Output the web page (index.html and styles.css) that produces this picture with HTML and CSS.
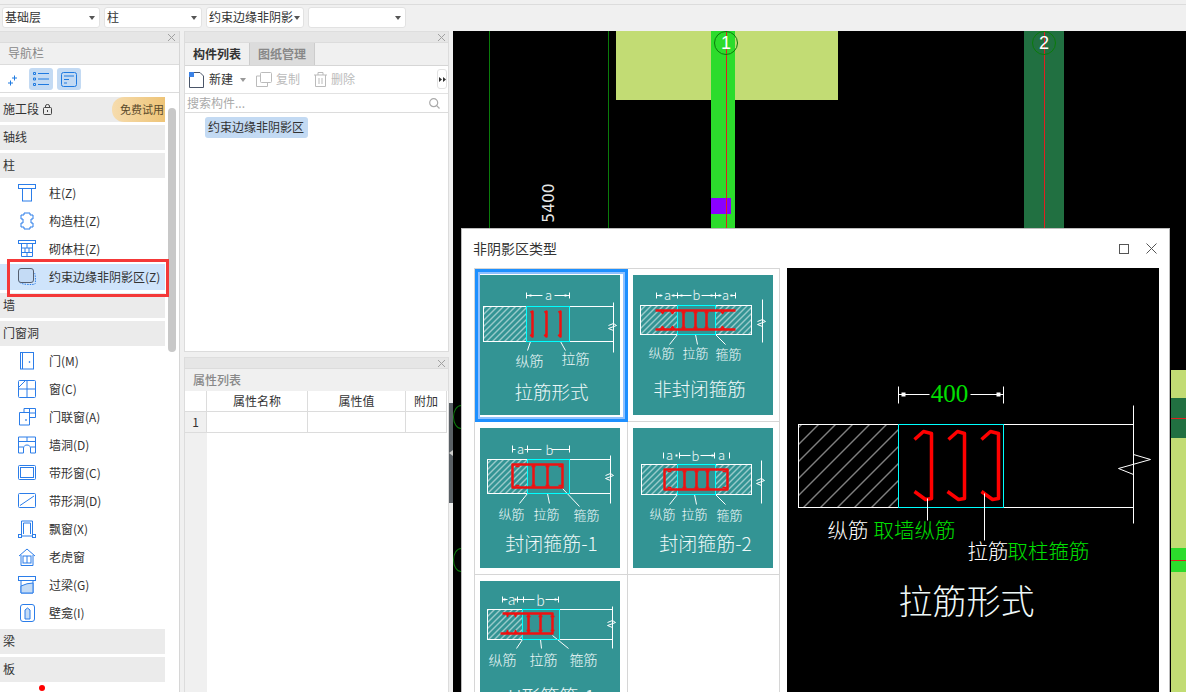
FILE: index.html
```html
<!DOCTYPE html>
<html lang="zh-CN">
<head>
<meta charset="utf-8">
<title>非阴影区类型</title>
<link rel="stylesheet" href="styles.css">
</head>
<body>
<div class="app">
  <div class="topbar">
    <div class="select"><span>基础层</span><i class="caret"></i></div>
    <div class="select"><span>柱</span><i class="caret"></i></div>
    <div class="select"><span>约束边缘非阴影</span><i class="caret"></i></div>
    <div class="select"><span></span><i class="caret"></i></div>
  </div>
  <div class="main">
    <aside class="nav">
      <div class="panel-head"><svg class="close" viewBox="0 0 7 7"><path d="M0 0l7 7M7 0L0 7"/></svg></div>
      <div class="nav-title">导航栏</div>
      <div class="nav-tools">
        <span class="tool"><svg width="14" height="14" viewBox="0 0 14 14" fill="none" stroke="#1f7ae0"><path d="M8.500 3.500v5M6 6h5M4.500 8.500v5M2 11h5"/></svg></span>
        <span class="tool on"><svg width="16" height="14" viewBox="0 0 16 14" fill="none" stroke="#1f7ae0"><path d="M5 1.500h11M5 7h11M5 12.500h11M.5.500h2v2h-2zM.5 6h2v2h-2zM.5 11.500h2v2h-2z"/></svg></span>
        <span class="tool on"><svg width="16" height="15" viewBox="0 0 16 15" fill="none" stroke="#1f7ae0"><rect x=".5" y=".5" width="15" height="14" rx="2"/><path d="M3 4h10M3 7.500h5M3 11h3"/></svg></span>
      </div>
      <div class="nav-list">
        <div class="row first">施工段 <svg class="lock" width="9" height="11" viewBox="0 0 9 11" fill="none" stroke="#444"><rect x=".5" y="3.500" width="8" height="7" rx="1"/><path d="M2.500 3.500V2a2 1.500 0 0 1 4 0v1.500M4.500 6v2"/></svg><span class="trial">免费试用</span></div>
        <div class="row">轴线</div>
        <div class="row">柱</div>
        <div class="group">
          <div class="item"><svg class="ico" viewBox="0 0 18 18"><rect x=".5" y=".5" width="17" height="4"/><rect x="4.500" y="4.500" width="9" height="12.500"/></svg>柱(Z)</div>
          <div class="item"><svg class="ico" viewBox="0 0 18 18"><path d="M6 1h6v2h3v4h-2v4h2v4h-3v2H6v-2H3v-4h2V7H3V3h3z" stroke-linejoin="round"/></svg>构造柱(Z)</div>
          <div class="item"><svg class="ico" viewBox="0 0 18 18"><rect x=".5" y=".5" width="17" height="3"/><path d="M3.500 3.500h11v13h-11zM3.500 8h11M3.500 12.500h11M9 3.500V8M7 8v4.500M11 8v4.500M9 12.500v4"/></svg>砌体柱(Z)</div>
          <div class="item active"><svg class="ico" viewBox="0 0 18 18"><path d="M2 14.500c1 2 13 2.500 15 1.500.8-1 .5-10-.5-11" stroke-dasharray="1.500 1"/><rect x=".5" y=".5" width="15" height="14" rx="2.500" fill="#c4dbf5" stroke="#555f70"/></svg>约束边缘非阴影区(Z)<span class="redbox"></span></div>
        </div>
        <div class="row">墙</div>
        <div class="row">门窗洞</div>
        <div class="group">
          <div class="item"><svg class="ico" viewBox="0 0 18 18"><rect x="2.500" y=".5" width="13" height="16.500"/><path d="M4.500 .5V17"/><circle cx="11.500" cy="10" r=".5"/></svg>门(M)</div>
          <div class="item"><svg class="ico" viewBox="0 0 18 18"><rect x=".5" y=".5" width="17" height="17" rx="1"/><path d="M.5 9h17M9 .5v17M1 7L7 1"/></svg>窗(C)</div>
          <div class="item"><svg class="ico" viewBox="0 0 18 18"><path d="M1.500 17V4.500h10V17zM11.500 9.500h6V.5H6v4M11.500 .5v9M11.500 5h6"/><circle cx="8" cy="12" r=".5"/></svg>门联窗(A)</div>
          <div class="item"><svg class="ico" viewBox="0 0 18 18"><path d="M.5 17V1h17v16h-5v-5c0-4-7-4-7 0v5zM.5 5.500h17M.5 11h4.500M13 11h4.500M9 1v4.500"/></svg>墙洞(D)</div>
          <div class="item"><svg class="ico" viewBox="0 0 18 18"><rect x=".5" y="1.500" width="17" height="14" rx="1"/><rect x="2.500" y="3.500" width="13" height="10"/></svg>带形窗(C)</div>
          <div class="item"><svg class="ico" viewBox="0 0 18 18"><rect x=".5" y="1.500" width="17" height="14" rx="1"/><path d="M2 13.500L16 4"/></svg>带形洞(D)</div>
          <div class="item"><svg class="ico" viewBox="0 0 18 18"><path d="M3.500 14V1h11v13M5.500 14V3h7v11"/><rect x=".5" y="14.500" width="3" height="3"/><rect x="14.500" y="14.500" width="3" height="3"/><path d="M3.500 16h11"/></svg>飘窗(X)</div>
          <div class="item"><svg class="ico" viewBox="0 0 18 18"><path d="M1 8l8-7 8 7M3 7v10.500h12V7"/><rect x="5" y="8" width="8" height="7"/><path d="M9 8v7"/></svg>老虎窗</div>
          <div class="item"><svg class="ico" viewBox="0 0 18 18"><rect x=".5" y=".5" width="17" height="4"/><path d="M3 4.500h12v12.500H3z"/><path d="M3 10q6-3 12-3v10H3z" fill="#c4dbf5"/></svg>过梁(G)</div>
          <div class="item"><svg class="ico" viewBox="0 0 18 18"><rect x="2.500" y=".5" width="14" height="17" rx="2.500"/><path d="M7 15V6l2.500-2L12 6v9z" fill="#c4dbf5"/></svg>壁龛(I)</div>
        </div>
        <div class="row tight">梁</div>
        <div class="row">板</div>
      </div>
      <span class="scrollbar"></span>
      <span class="reddot"></span>
    </aside>

    <section class="mid">
      <div class="mid-top">
        <div class="panel-head"><svg class="close" viewBox="0 0 7 7"><path d="M0 0l7 7M7 0L0 7"/></svg></div>
        <div class="tabs"><span class="tab on">构件列表</span><span class="tab">图纸管理</span></div>
        <div class="actions">
          <span class="act dark"><svg width="16" height="16" viewBox="0 0 16 16" fill="none" stroke="#4a5568"><path d="M.5 5v10.500h14V4L11 .5H3"/><rect x="0" y="0" width="5" height="5" fill="#3b82e6" stroke="none"/></svg>新建<i class="caret small"></i></span>
          <span class="act"><svg width="16" height="15" viewBox="0 0 16 15" fill="none" stroke="#bbb"><rect x="4.500" y=".5" width="11" height="10" rx="1"/><path d="M4 4H.5v10.500h11V11"/></svg>复制</span>
          <span class="act"><svg width="13" height="15" viewBox="0 0 13 15" fill="none" stroke="#bbb"><path d="M0 3h13M4 3V.5h5V3M1.500 3v11.500h10V3M5 6v6M8 6v6"/></svg>删除</span>
          <span class="more"><svg width="7" height="5" viewBox="0 0 7 5" fill="#333"><path d="M0 0l3 2.500L0 5zM4 0l3 2.500L4 5z"/></svg></span>
        </div>
        <div class="search"><span>搜索构件...</span><svg width="11" height="11" viewBox="0 0 11 11" fill="none" stroke="#aaa" stroke-width="1.200"><circle cx="4.700" cy="4.700" r="4"/><path d="M7.700 7.700L10.500 10.500"/></svg></div>
        <div class="tree"><span class="chip">约束边缘非阴影区</span></div>
      </div>
      <div class="mid-bottom">
        <div class="panel-head"><svg class="close" viewBox="0 0 7 7"><path d="M0 0l7 7M7 0L0 7"/></svg></div>
        <div class="prop-title">属性列表</div>
        <div class="grid-table">
          <span class="cell corner"></span><span class="cell">属性名称</span><span class="cell">属性值</span><span class="cell">附加</span>
          <span class="cell idx">1</span><span class="cell"></span><span class="cell"></span><span class="cell"></span>
        </div>
        <div class="idx-rest"></div>
      </div>
      <span class="splitter"></span>
    </section>

    <section class="canvas">
      <span class="cad gline g1"></span>
      <span class="cad gline g2"></span>
      <span class="cad slab"></span>
      <span class="cad col col1"></span>
      <span class="cad purple"></span>
      <span class="cad col col2"></span>
      <span class="cad redline r1"></span>
      <span class="cad redline r2"></span>
      <span class="cad axis a1">1</span>
      <span class="cad axis a2">2</span>
      <span class="cad dim5400">5400</span>
      <span class="cad bubble b1"></span>
      <span class="cad bubble b2"></span>
      <span class="cad slab2"></span>
      <span class="cad band1"></span>
      <span class="cad band2"></span>
      <span class="cad rl3"></span>
      <span class="cad rl4"></span>

      <div class="dialog">
        <div class="dlg-head">
          <span>非阴影区类型</span>
          <span class="dlg-btns"><i class="maxi"></i><svg width="11" height="11" viewBox="0 0 11 11" fill="none" stroke="#555"><path d="M.5.500l10 10M10.500.5l-10 10"/></svg></span>
        </div>
        <div class="dlg-body">
          <div class="thumbs">
            <div class="thumb sel">
              <svg class="card" viewBox="0 0 140 140">
                <defs>
                  <pattern id="h6" width="6" height="6" patternUnits="userSpaceOnUse"><path class="hatch" d="M0 6L6 0"/></pattern>
                  <pattern id="h17" width="17" height="17" patternUnits="userSpaceOnUse"><path class="hatch" d="M0 17L17 0"/></pattern>
                </defs>
                <path class="w" d="M46 17v6M89 17v6M46 20h16M74 20h15M46 31h87M46 66h87M133 27v50M128 50l5-2 3 2-8 3 5 2M50 66l-3 9M80 66l5 9"/>
                <path class="sq" d="M49 19h2v2h-2zM84 19h2v2h-2z"/>
                <rect x="3" y="31" width="43" height="35" fill="url(#h6)" stroke="#fff"/>
                <rect class="cy" x="46" y="31" width="43" height="35"/>
                <path class="r" d="M50 37l2-1v25l-2-2M64 37l2-1v25l-2-2M78 37l2-1v25l-2-2"/>
                <text class="t" x="68" y="24" font-size="13">a</text>
                <text class="t" x="49" y="90" font-size="14">纵筋</text>
                <text class="t" x="95" y="88" font-size="14">拉筋</text>
                <text class="t" x="71" y="123" font-size="18.500">拉筋形式</text>
              </svg>
            </div>
            <div class="thumb">
              <svg class="card" viewBox="0 0 140 140">
                <path class="w" d="M23 17v6M44 17v6M82 17v6M102 17v6M23 20h6M38 20h6M44 20h14M68 20h14M82 20h6M97 20h5M7 30h111M7 59h111M118 30v29M129 24v43M124 46l5-2 3 2-8 3 5 2M44 59l-8 10M62 59l2 10M82 59l10 10"/>
                <path class="sq" d="M26 19h2v2h-2zM39 19h2v2h-2zM47 19h2v2h-2zM77 19h2v2h-2zM85 19h2v2h-2zM97 19h2v2h-2z"/>
                <rect x="7" y="30" width="37" height="29" fill="url(#h6)" stroke="#fff"/>
                <rect x="82" y="30" width="36" height="29" fill="url(#h6)" stroke="#fff"/>
                <rect class="cy" x="44" y="30" width="38" height="29"/>
                <path class="r b" d="M22 35h80M22 54h80M50 35v19M62 35v19M73 35v19"/>
                <path class="r tick" d="M27 35l2 3 2-3M37 35l2 3 2-3M48 37h4M60 37h4M71 37h4M87 35l2 3 2-3M27 54l2-3 2 3M37 54l2-3 2 3M48 52h4M60 52h4M71 52h4M87 54l2-3 2 3"/>
                <text class="t" x="34" y="24" font-size="13">a</text><text class="t" x="63" y="24" font-size="13">b</text><text class="t" x="92" y="24" font-size="13">a</text>
                <text class="t" x="28" y="82" font-size="13">纵筋</text>
                <text class="t" x="62" y="82" font-size="13">拉筋</text>
                <text class="t" x="95" y="83" font-size="13">箍筋</text>
                <text class="t" x="66" y="120" font-size="18.500">非封闭箍筋</text>
              </svg>
            </div>
            <div class="thumb">
              <svg class="card" viewBox="0 0 140 140">
                <path class="w" d="M32 17v7M47 17v7M89 17v7M32 21h3M44 21h3M47 21h14M71 21h18M7 31h123M7 65h123M130 27v48M125 47l5-2 3 2-8 3 5 2M47 65l-8 10M67 65l2 10M82 60l17 18"/>
                <rect x="7" y="31" width="40" height="34" fill="url(#h6)" stroke="#fff"/>
                <rect class="cy" x="47" y="31" width="42" height="34"/>
                <path class="r b" d="M32 36h50v23H32zM53 36v23M67 36v23"/>
                <path class="r tick" d="M35 38h4M51 38h4M65 38h4M78 38h4M35 57h4M51 57h4M65 57h4M78 57h4"/>
                <text class="t" x="40" y="25" font-size="13">a</text><text class="t" x="69" y="26" font-size="13">b</text>
                <text class="t" x="31" y="90" font-size="13">纵筋</text>
                <text class="t" x="66" y="90" font-size="13">拉筋</text>
                <text class="t" x="106" y="91" font-size="13">箍筋</text>
                <text class="t" x="71" y="122" font-size="19">封闭箍筋-1</text>
              </svg>
            </div>
            <div class="thumb">
              <svg class="card" viewBox="0 0 140 140">
                <path class="w" d="M30 24v6M46 24v6M81 24v6M96 24v6M46 27h11M67 27h14M8 36h110M8 66h110M118 36v30M128 32v43M123 52l5-2 3 2-8 3 5 2M44 66l-8 10M61 66l2 10M82 66l10 10"/>
                <path class="sq" d="M42 26h2v2h-2zM78 26h2v2h-2z"/>
                <rect x="8" y="36" width="36" height="30" fill="url(#h6)" stroke="#fff"/>
                <rect x="82" y="36" width="36" height="30" fill="url(#h6)" stroke="#fff"/>
                <rect class="cy" x="44" y="36" width="38" height="30"/>
                <path class="r b" d="M31 41h63v20H31zM51 41v20M63 41v20M74 41v20"/>
                <path class="r tick" d="M34 43h4M49 43h4M61 43h4M72 43h4M89 43h4M34 59h4M49 59h4M61 59h4M72 59h4M89 59h4"/>
                <text class="t" x="36" y="31" font-size="13">a</text><text class="t" x="62" y="32" font-size="13">b</text><text class="t" x="88" y="31" font-size="13">a</text>
                <text class="t" x="29" y="90" font-size="13">纵筋</text>
                <text class="t" x="61" y="90" font-size="13">拉筋</text>
                <text class="t" x="96" y="91" font-size="13">箍筋</text>
                <text class="t" x="72" y="122" font-size="19">封闭箍筋-2</text>
              </svg>
            </div>
            <div class="thumb">
              <svg class="card" viewBox="0 0 140 140">
                <path class="w" d="M22 15v6M37 15v6M43 15v6M78 15v6M22 18h5M36 18h8M43 18h11M65 18h13M7 28h125M7 58h125M132 25v42M127 41l5-2 3 2-8 3 5 2M42 58l-6 9M60 58l1 9M72 54l16 13"/>
                <path class="sq" d="M23 17h2v2h-2zM34 17h2v2h-2zM74 17h2v2h-2z"/>
                <rect x="7" y="28" width="35" height="30" fill="url(#h6)" stroke="#fff"/>
                <rect class="cy" x="42" y="28" width="37" height="30"/>
                <path class="r b" d="M22 32h50v20H20M48 32v20M60 32v20"/>
                <path class="r tick" d="M26 32l1 3 1-3M34 32l1 3 1-3M26 52l1-3 1 3M34 52l1-3 1 3M46 35h4M58 35h4M70 35h4M46 49h4M58 49h4M70 49h4"/>
                <text class="t" x="31" y="23" font-size="14">a</text><text class="t" x="60" y="24" font-size="14">b</text>
                <text class="t" x="22" y="83" font-size="14">纵筋</text>
                <text class="t" x="63" y="83" font-size="14">拉筋</text>
                <text class="t" x="103" y="83" font-size="14">箍筋</text>
                <text class="t" x="71" y="122" font-size="19">U形箍筋-1</text>
              </svg>
            </div>
            <div class="thumb"></div>
          </div>
          <div class="preview">
            <svg width="372" height="424" viewBox="0 0 372 424">
              <path d="M111 118v17M216 118v17M111 126h31M183 126h33" fill="none" stroke="#fff"/>
              <path d="M114 124h4v4h-4zM209 124h4v4h-4z" fill="#fff"/>
              <text class="big green serif" x="162" y="133" font-size="25">400</text>
              <rect x="11" y="156" width="100" height="83" fill="url(#h17)" stroke="#fff"/>
              <path d="M216 156h130M216 239h130M346 137v118M346 186l17 5-32 9 15 6" fill="none" stroke="#fff"/>
              <rect x="111" y="156" width="105" height="83" fill="none" stroke="#00ffff"/>
              <path class="r big-r" d="M127 171l9-8 8 2v65l-6 1-11-8M161 171l9-8 7 2v65l-6 1-11-8M194 171l9-8 8 2v65l-6 1-11-8"/>
              <path d="M140 230v22M197 225v47" fill="none" stroke="#fff"/>
              <text class="s" x="40" y="269" font-size="20.500">纵筋</text>
              <text class="s green" x="86" y="269" font-size="20.500">取墙纵筋</text>
              <text class="s" x="180" y="290" font-size="20.500">拉筋</text>
              <text class="s green" x="220" y="290" font-size="20.500">取柱箍筋</text>
              <text class="t" x="179" y="345" font-size="34" fill="#fff">拉筋形式</text>
            </svg>
          </div>
        </div>
      </div>
    </section>
  </div>
</div>
</body>
</html>
```
FILE: styles.css
```css
* { box-sizing: border-box; }
html, body { margin: 0; padding: 0; }
body { background: #f0f0f0; font: 12px/1.2 "Noto Sans CJK SC", "Noto Sans", sans-serif; color: #333; }
.app { width: 1186px; height: 692px; overflow: hidden; display: flex; flex-direction: column; }

.topbar { height: 27px; flex: none; margin-top: 4px; border-top: 1px solid #dcdcdc; padding: 2px 0 0 2px; display: flex; gap: 4px; }
.select { width: 98px; height: 21px; background: #fff; border: 1px solid #e2e2e2; border-radius: 3px; padding: 0 4px 0 2px; display: flex; align-items: center; justify-content: space-between; white-space: nowrap; overflow: hidden; }
.caret { width: 0; height: 0; flex: none; border: 3px solid transparent; border-top: 4px solid #555; border-bottom: 0; margin-left: 1px; }
.caret.small { border-top-color: #999; margin-left: 3px; }

.main { flex: 1; display: flex; min-height: 0; }
.panel-head { height: 12px; flex: none; background: #e6e6e6; border-top: 1px solid #dedede; border-bottom: 1px solid #dcdcdc; position: relative; }
.close { position: absolute; right: 4px; top: 2px; width: 7px; height: 7px; fill: none; stroke: #a0a0a0; overflow: visible; }

.nav { width: 180px; flex: none; border-right: 1px solid #d6d6d6; position: relative; display: flex; flex-direction: column; background: #fff; overflow: hidden; }
.nav-title { height: 22px; flex: none; background: #f0f0f0; border-bottom: 1px solid #dcdcdc; padding-left: 8px; line-height: 20px; color: #888; }
.nav-tools { height: 28px; flex: none; border-bottom: 1px solid #dcdcdc; background: #fff; padding: 3px 0 0 1px; display: flex; gap: 4px; }
.tool { width: 24px; height: 22px; border-radius: 3px; display: flex; align-items: center; justify-content: center; }
.tool.on { background: #c3daf3; }
.nav-list { width: 165px; }
.row { height: 25px; margin-top: 3px; background: #ebebeb; padding-left: 3px; line-height: 24px; position: relative; white-space: nowrap; overflow: hidden; }
.row.first { margin-top: 4px; }
.lock { margin-left: 1px; vertical-align: -1px; }
.trial { position: absolute; right: 0; top: 0; width: 53px; height: 25px; border-radius: 12px 0 0 12px; background: linear-gradient(90deg, #f6dcae, #eec477); color: #5a4a2a; padding-left: 8px; line-height: 24px; font-size: 11px; }
.group { margin-top: 1px; }
.group + .row { margin-top: 2px; }
.item { height: 28px; padding-left: 18px; display: flex; align-items: center; position: relative; white-space: nowrap; }
.ico { width: 18px; height: 18px; flex: none; margin-right: 13px; fill: none; stroke: #2b7de9; overflow: visible; }
.item.active { background: linear-gradient(#fff 1px, #cfe4fb 1px, #cfe4fb 27px, #fff 27px); z-index: 2; }
.redbox { position: absolute; left: 7px; top: -4px; width: 162px; height: 38px; border: 3px solid #f43838; }
.row.tight { margin-top: 2px; }
.scrollbar { position: absolute; left: 168px; top: 77px; width: 8px; height: 244px; border-radius: 4px; background: #c8c8c8; }
.reddot { position: absolute; left: 39px; top: 654px; width: 6px; height: 6px; border-radius: 50%; background: #f00; }

.mid { width: 265px; flex: none; margin-left: 4px; display: flex; flex-direction: column; gap: 5px; position: relative; }
.mid-top { height: 321px; flex: none; display: flex; flex-direction: column; border: 1px solid #dcdcdc; border-top: 0; background: #fff; }
.mid .close { right: 3px; }
.tabs { height: 23px; flex: none; background: #f0f0f0; border-bottom: 1px solid #d6d6d6; display: flex; }
.tab { width: 65px; line-height: 22px; text-align: center; background: #dcdcdc; color: #888; font-weight: 700; border-right: 1px solid #ccc; }
.tab.on { background: #f0f0f0; color: #333; }
.actions { height: 28px; flex: none; border-bottom: 1px solid #e2e2e2; display: flex; align-items: center; padding-left: 4px; position: relative; color: #bbb; }
.act { display: flex; align-items: center; gap: 4px; margin-right: 14px; }
.act.dark { color: #333; margin-right: 10px; }
.more { position: absolute; right: 1px; top: 3px; width: 10px; height: 20px; border: 1px solid #e2e2e2; border-radius: 3px; display: flex; align-items: center; justify-content: center; }
.search { height: 19px; flex: none; border-bottom: 1px solid #dcdcdc; padding: 0 8px 0 2px; color: #aaa; display: flex; align-items: center; justify-content: space-between; }
.tree { flex: 1; padding: 4px 0 0 20px; }
.chip { display: inline-block; height: 21px; line-height: 20px; padding: 0 4px 0 3px; border-radius: 3px; background: #c3daf3; white-space: nowrap; }

.mid-bottom { flex: 1; min-height: 0; display: flex; flex-direction: column; border: 1px solid #dcdcdc; border-top: 0; background: #fff; border-bottom: 0; }
.prop-title { height: 22px; flex: none; background: #f0f0f0; padding-left: 8px; line-height: 22px; color: #888; font-weight: 500; }
.grid-table { display: grid; grid-template-columns: 22px 101px 98px 41px; grid-auto-rows: 21px; flex: none; }
.cell { border-right: 1px solid #dcdcdc; border-bottom: 1px solid #dcdcdc; text-align: center; line-height: 20px; background: #fff; }
.cell.idx { background: #f0f0f0; }
.idx-rest { width: 22px; flex: 1; background: #f0f0f0; }
.splitter { position: absolute; right: -4px; top: 372px; width: 4px; height: 100px; background: #5a6066; }
.splitter::after { content: ""; position: absolute; left: 0; top: 47px; border: 3px solid transparent; border-right: 4px solid #ccc; border-left: 0; }

.canvas { flex: 1; margin-left: 4px; background: #000; position: relative; overflow: hidden; }
.cad { position: absolute; display: block; }
.gline { top: 0; width: 1px; height: 200px; background: #0a7a0a; }
.g1 { left: 36px; }
.g2 { left: 155px; }
.slab { left: 163px; top: 0; width: 222px; height: 69px; background: #c2dc74; }
.col { top: 0; height: 200px; }
.col1 { left: 258px; width: 24px; background: #2cdc2c; }
.col2 { left: 571px; width: 40px; background: #217041; }
.purple { left: 258px; top: 167px; width: 20px; height: 16px; background: #8a00ff; z-index: 1; }
.redline { top: 0; width: 1px; height: 200px; background: #e02020; z-index: 2; }
.r1 { left: 273px; }
.r2 { left: 591px; }
.axis { top: 0; width: 24px; height: 24px; border: 1px solid #0a7a0a; border-radius: 50%; color: #fff; text-align: center; font: 18px/22px "Liberation Sans", sans-serif; z-index: 3; }
.a1 { left: 261px; }
.a2 { left: 579px; }
.dim5400 { left: 74px; top: 162px; width: 44px; height: 20px; transform: rotate(-90deg); color: #e8e8e8; font: 15.500px/20px "DejaVu Sans", sans-serif; text-align: center; }
.bubble { left: 0; width: 16px; height: 24px; border: 1px solid #0a7a0a; border-radius: 50%; }
.b1 { top: 374px; }
.b2 { top: 517px; }
.slab2 { left: 718px; top: 339px; width: 15px; height: 322px; background: #c2dc74; }
.band1 { left: 718px; top: 367px; width: 15px; height: 40px; background: #217041; }
.band2 { left: 718px; top: 517px; width: 15px; height: 24px; background: #2cdc2c; }
.rl3 { left: 718px; top: 387px; width: 15px; height: 1px; background: #e02020; }
.rl4 { left: 718px; top: 529px; width: 15px; height: 1px; background: #e02020; }

.dialog { position: absolute; left: 8px; top: 197px; width: 709px; height: 480px; background: #fff; border: 1px solid #bdbdbd; z-index: 6; }
.dlg-head { height: 39px; display: flex; align-items: center; justify-content: space-between; padding: 0 12px 0 11px; color: #333; font-size: 14px; }
.dlg-btns { display: flex; align-items: center; gap: 17px; }
.maxi { display: block; width: 10px; height: 10px; border: 1px solid #555; }
.dlg-body { display: flex; padding-left: 12px; gap: 7px; }
.thumbs { width: 306px; height: 440px; border: 1px solid #d6d6d6; display: grid; grid-template-columns: 153px 151px; grid-auto-rows: 153px; align-content: start; flex: none; }
.thumb { border-right: 1px solid #d6d6d6; border-bottom: 1px solid #d6d6d6; padding: 6px 0 0 5px; }
.thumb:nth-child(2n) { border-right: 0; }
.thumb:nth-child(n+5) { border-bottom: 0; }
.thumb.sel { border: 0; box-shadow: inset 0 0 0 3px #1e90ff, inset 0 0 0 5px #8fc1ff; }
.card { display: block; width: 140px; height: 140px; background: #339494; overflow: hidden; }
.card > *, .preview svg > * { transform: translate(.5px, .5px); }
.hatch { stroke: #fff; stroke-width: 1; shape-rendering: crispEdges; }
.w { fill: none; stroke: #fff; }
.sq { fill: #fff; stroke: none; }
.cy { fill: none; stroke: #00ffff; }
.r { fill: none; stroke: #f01010; stroke-width: 2.500; stroke-linejoin: round; }
.r.tick { stroke-width: 1.500; }
.r.big-r { stroke-width: 3.500; stroke: #f00; }
.t { fill: #eef8f8; text-anchor: middle; font-family: "Noto Sans CJK SC", sans-serif; font-weight: 300; }
.preview { width: 372px; height: 424px; background: #000; flex: none; }
.preview svg { display: block; }
.s { fill: #fff; font-family: "Noto Sans CJK SC", sans-serif; font-weight: 300; }
.big { text-anchor: middle; }
.green { fill: #00e000; }
.serif { font-family: "Liberation Serif", serif; }
```
